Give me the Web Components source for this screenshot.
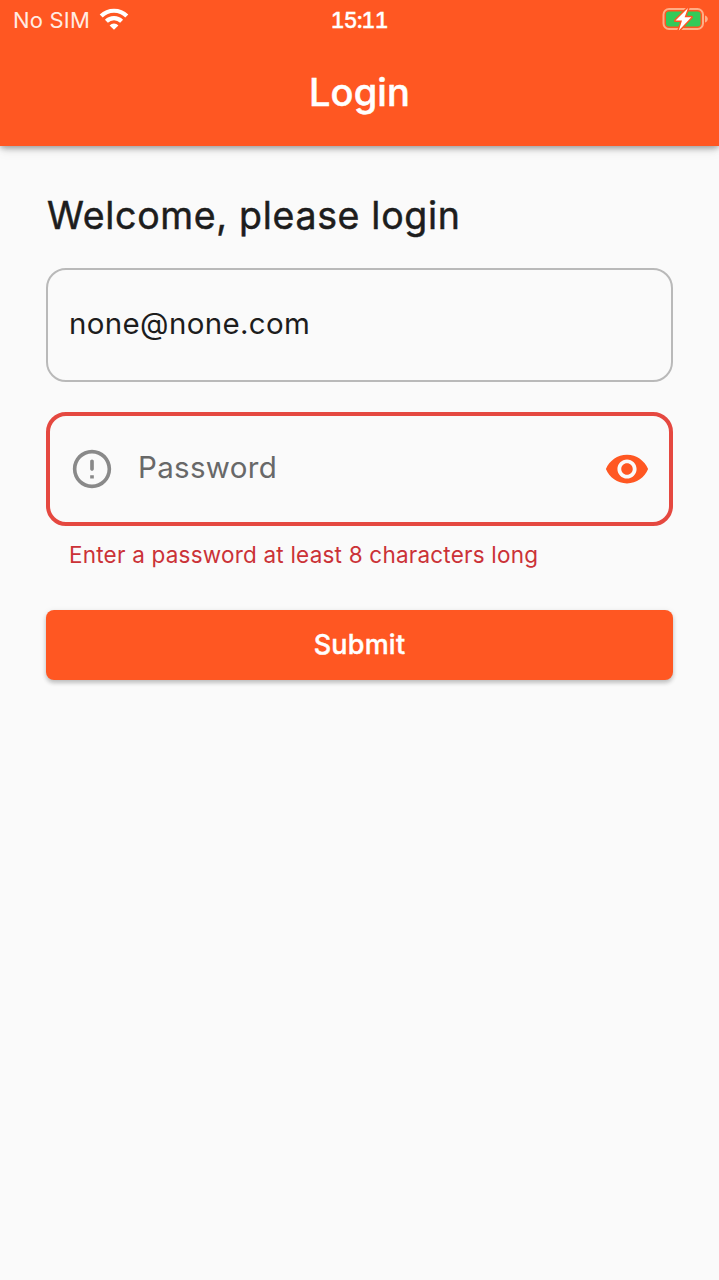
<!DOCTYPE html>
<html lang="en">
<head>
<meta charset="utf-8">
<title>Login</title>
<style>
    body {
        margin: 0;
        min-height: 100vh;
        background: #fafafa;
        color: #1d1d1d;
        font-family: Inter, "Liberation Sans", sans-serif;
        --primary: #ff5722;
    }
</style>
</head>
<body>
<login-screen></login-screen>

<script>
class StatusBar extends HTMLElement {
    constructor() {
        super();
        this.attachShadow({mode: 'open'});
        this.shadowRoot.innerHTML = `
            <style>
                :host {
                    display: grid;
                    grid-template-columns: 1fr auto 1fr;
                    align-items: center;
                    height: 40px;
                    padding: 0 11px 0 13px;
                    box-sizing: border-box;
                    font-size: 22px;
                    line-height: 40px;
                }
                .carrier {
                    display: flex;
                    align-items: center;
                    gap: 9px;
                    color: #ffece2;
                    letter-spacing: 0.2px;
                }
                .time {
                    padding-right: 3px;
                    font-weight: 500;
                    font-variant-numeric: tabular-nums;
                    letter-spacing: -1.2px;
                    -webkit-text-stroke: 0.3px currentColor;
                }
                .battery {
                    justify-self: end;
                }
                svg {
                    display: block;
                    margin-bottom: 2px;
                }
            </style>
            <div class="carrier">
                <slot name="carrier"></slot>
                <svg width="30" height="22" viewBox="0 0 30 22">
                    <path fill="none" stroke="#fff" stroke-width="4.2" d="M2.2 8.1a18 18 0 0 1 25.6 0M7.4 13.3a10.8 10.8 0 0 1 15.2 0"/>
                    <path fill="#fff" d="M15 21.8l-4.4-4.4a6.2 6.2 0 0 1 8.8 0z"/>
                </svg>
            </div>
            <div class="time"><slot name="time"></slot></div>
            <svg class="battery" width="46" height="26" viewBox="0 0 46 26">
                <rect x="1.5" y="3" width="39.5" height="20" rx="5.5" fill="none" stroke="#ffae86" stroke-width="2"/>
                <path fill="#ffae86" d="M43 9.5c2 .6 2.8 2 2.8 3.5s-.8 2.9-2.8 3.5z"/>
                <rect x="4" y="5.5" width="34.5" height="15" rx="3" fill="#34ca58"/>
                <path fill="#fff" stroke="#ff5722" stroke-width="3" paint-order="stroke" stroke-linejoin="round" d="M26 2L13.5 14.6h6.5L16.8 24.4 29.3 11.2h-6.7z"/>
            </svg>
        `;
    }
}

class AppBar extends HTMLElement {
    constructor() {
        super();
        this.attachShadow({mode: 'open'});
        this.shadowRoot.innerHTML = `
            <style>
                :host {
                    display: flex;
                    flex-direction: column;
                    height: 146px;
                    background: var(--primary);
                    color: #fff;
                    box-shadow: 0 4px 8px -2px rgba(0,0,0,0.2), 0 8px 10px rgba(0,0,0,0.03), 0 2px 5px rgba(0,0,0,0.22);
                }
                h1 {
                    flex: 1;
                    display: flex;
                    align-items: center;
                    justify-content: center;
                    margin: 0;
                    padding-bottom: 3px;
                    font-size: 38px;
                    font-weight: 500;
                    letter-spacing: 0.1px;
                    -webkit-text-stroke: 0.5px currentColor;
                }
            </style>
            <slot name="status"></slot>
            <h1><slot></slot></h1>
        `;
    }
}

class MdIcon extends HTMLElement {
    static paths = {
        error: 'M11.05 15.2h1.9v1.8h-1.9zM12 7c.52 0 .95.43.95.95V12c0 .52-.43.95-.95.95s-.95-.43-.95-.95V7.95c0-.52.43-.95.95-.95zM12 2C6.47 2 2 6.48 2 12s4.47 10 10 10 10-4.48 10-10S17.52 2 12 2zm0 18.1c-4.47 0-8.1-3.63-8.1-8.1S7.53 3.9 12 3.9s8.1 3.63 8.1 8.1-3.63 8.1-8.1 8.1z',
        eye: 'M12 4.5C7 4.5 2.73 7.61 1 12c1.73 4.39 6 7.5 11 7.5s9.27-3.11 11-7.5c-1.73-4.39-6-7.5-11-7.5zM12 17c-2.76 0-5-2.24-5-5s2.24-5 5-5 5 2.24 5 5-2.24 5-5 5zm0-8c-1.66 0-3 1.34-3 3s1.34 3 3 3 3-1.34 3-3-1.34-3-3-3z'
    };

    constructor() {
        super();
        this.attachShadow({mode: 'open'});
        this.shadowRoot.innerHTML = `
            <style>
                :host {
                    display: block;
                    flex: none;
                    width: 46px;
                    height: 46px;
                }
                svg {
                    display: block;
                    width: 100%;
                    height: 100%;
                    fill: currentColor;
                }
            </style>
            <svg viewBox="0 0 24 24"><path fill-rule="evenodd" d="${MdIcon.paths[this.getAttribute('name')]}"/></svg>
        `;
    }
}

class TextField extends HTMLElement {
    constructor() {
        super();
        this.attachShadow({mode: 'open'});
        this.shadowRoot.innerHTML = `
            <style>
                :host {
                    display: block;
                }
                .box {
                    display: flex;
                    align-items: center;
                    height: 114px;
                    box-sizing: border-box;
                    padding: 0 21px 4px;
                    border: 2px solid #b9b9b9;
                    border-radius: 20px;
                    font-size: 29.5px;
                    letter-spacing: 0.33px;
                }
                .value {
                    flex: 1;
                }
                ::slotted([slot="prefix"]) {
                    color: #898989;
                    margin: 4px 23px 0 0;
                }
                ::slotted([slot="suffix"]) {
                    color: var(--primary);
                    margin-top: 4px;
                }
                .error {
                    display: none;
                    padding: 14px 23px 0;
                    color: #cb3237;
                    font-size: 22.5px;
                    line-height: 30px;
                    letter-spacing: 0.21px;
                }
                :host([invalid]) .box {
                    border: 4px solid #e54840;
                    padding: 0 19px 4px;
                    color: #686868;
                }
                :host([invalid]) .error {
                    display: block;
                }
            </style>
            <div class="box">
                <slot name="prefix"></slot>
                <span class="value"><slot></slot></span>
                <slot name="suffix"></slot>
            </div>
            <div class="error"><slot name="error"></slot></div>
        `;
    }
}

class RaisedButton extends HTMLElement {
    constructor() {
        super();
        this.attachShadow({mode: 'open'});
        this.shadowRoot.innerHTML = `
            <style>
                :host {
                    display: block;
                }
                button {
                    display: block;
                    width: 100%;
                    height: 70px;
                    padding: 0 0 2px;
                    border: 0;
                    border-radius: 8px;
                    background: var(--primary);
                    color: #fff;
                    font: 500 27px Inter, "Liberation Sans", sans-serif;
                    letter-spacing: 0.2px;
                    -webkit-text-stroke: 0.4px currentColor;
                    box-shadow: 0 3px 4px rgba(0,0,0,0.2), 0 1px 6px rgba(0,0,0,0.08);
                }
            </style>
            <button type="button"><slot></slot></button>
        `;
    }
}

class LoginScreen extends HTMLElement {
    constructor() {
        super();
        this.attachShadow({mode: 'open'});
        this.shadowRoot.innerHTML = `
            <style>
                :host {
                    display: block;
                }
                form {
                    display: flex;
                    flex-direction: column;
                    padding: 46px 46px 0;
                }
                h2 {
                    margin: 0 0 30px 1px;
                    font-size: 37.5px;
                    font-weight: 400;
                    line-height: 47px;
                    height: 46px;
                    letter-spacing: 0.68px;
                    -webkit-text-stroke: 0.5px currentColor;
                }
                .password {
                    margin: 30px 0 40px;
                }
            </style>
            <app-bar>
                <status-bar slot="status">
                    <span slot="carrier">No SIM</span>
                    <span slot="time">15:11</span>
                </status-bar>
                Login
            </app-bar>
            <form>
                <h2>Welcome, please login</h2>
                <text-field>none@none.com</text-field>
                <text-field class="password" invalid>
                    <md-icon slot="prefix" name="error"></md-icon>
                    Password
                    <md-icon slot="suffix" name="eye"></md-icon>
                    <span slot="error">Enter a password at least 8 characters long</span>
                </text-field>
                <raised-button>Submit</raised-button>
            </form>
        `;
    }
}

customElements.define('status-bar', StatusBar);
customElements.define('app-bar', AppBar);
customElements.define('md-icon', MdIcon);
customElements.define('text-field', TextField);
customElements.define('raised-button', RaisedButton);
customElements.define('login-screen', LoginScreen);
</script>
</body>
</html>
